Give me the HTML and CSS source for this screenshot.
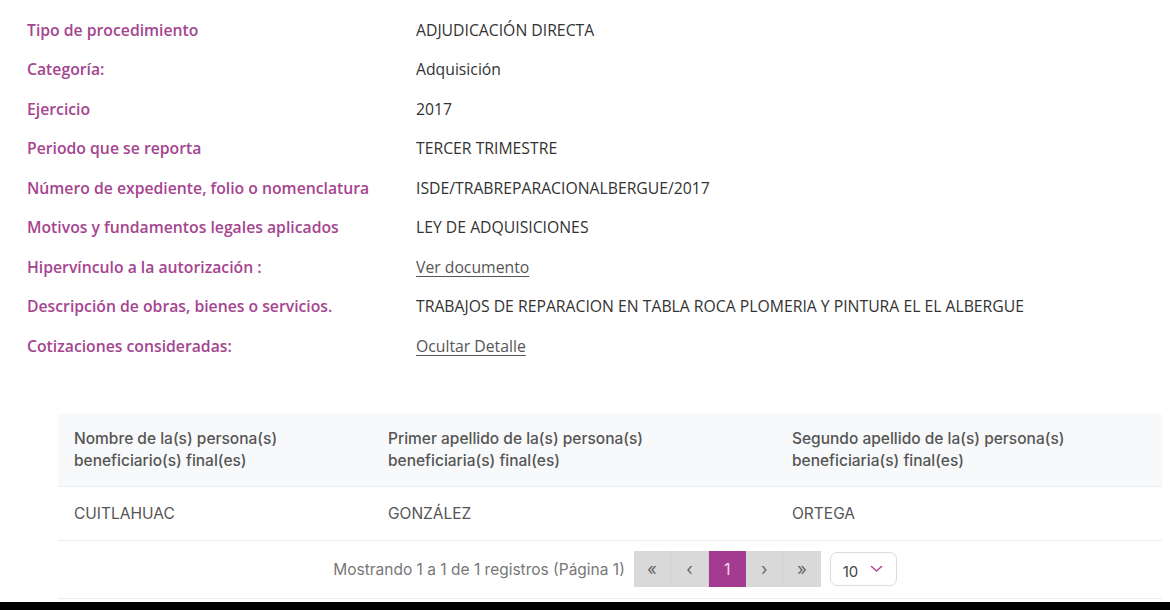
FILE: index.html
```html
<!DOCTYPE html>
<html lang="es">
<head>
    <meta charset="UTF-8">
    <meta name="viewport" content="width=device-width, initial-scale=1.0">
    <title>Detalle del procedimiento</title>
    <link rel="stylesheet" href="styles.css">
</head>
<body>
    <div class="page">
        <div class="details">
            <div class="row">
                <div class="label">Tipo de procedimiento</div>
                <div class="value">ADJUDICACIÓN DIRECTA</div>
            </div>
            <div class="row">
                <div class="label">Categoría:</div>
                <div class="value">Adquisición</div>
            </div>
            <div class="row">
                <div class="label">Ejercicio</div>
                <div class="value">2017</div>
            </div>
            <div class="row">
                <div class="label">Periodo que se reporta</div>
                <div class="value">TERCER TRIMESTRE</div>
            </div>
            <div class="row">
                <div class="label">Número de expediente, folio o nomenclatura</div>
                <div class="value">ISDE/TRABREPARACIONALBERGUE/2017</div>
            </div>
            <div class="row">
                <div class="label">Motivos y fundamentos legales aplicados</div>
                <div class="value">LEY DE ADQUISICIONES</div>
            </div>
            <div class="row">
                <div class="label">Hipervínculo a la autorización :</div>
                <div class="value"><a href="#" class="link">Ver documento</a></div>
            </div>
            <div class="row">
                <div class="label">Descripción de obras, bienes o servicios.</div>
                <div class="value">TRABAJOS DE REPARACION EN TABLA ROCA PLOMERIA Y PINTURA EL EL ALBERGUE</div>
            </div>
            <div class="row">
                <div class="label">Cotizaciones consideradas:</div>
                <div class="value"><a href="#" class="link">Ocultar Detalle</a></div>
            </div>
        </div>

        <div class="table-wrap">
            <table class="grid">
                <thead>
                    <tr>
                        <th class="col-1">Nombre de la(s) persona(s)<br>beneficiario(s) final(es)</th>
                        <th class="col-2">Primer apellido de la(s) persona(s)<br>beneficiaria(s) final(es)</th>
                        <th class="col-3">Segundo apellido de la(s) persona(s)<br>beneficiaria(s) final(es)</th>
                    </tr>
                </thead>
                <tbody>
                    <tr>
                        <td>CUITLAHUAC</td>
                        <td>GONZÁLEZ</td>
                        <td>ORTEGA</td>
                    </tr>
                </tbody>
            </table>
            <div class="table-footer">
                <span class="summary">Mostrando 1 a 1 de 1 registros (Página 1)</span>
                <div class="pager">
                    <button class="page-btn">&laquo;</button>
                    <button class="page-btn">&lsaquo;</button>
                    <button class="page-btn active">1</button>
                    <button class="page-btn">&rsaquo;</button>
                    <button class="page-btn">&raquo;</button>
                </div>
                <div class="page-size">
                    <span>10</span>
                    <svg width="13" height="8" viewBox="0 0 13 8"><path d="M1.5 1.5 L6.5 6 L11.5 1.5" fill="none" stroke="#b0489a" stroke-width="1.6" stroke-linecap="round" stroke-linejoin="round"/></svg>
                </div>
            </div>
        </div>
    </div>
    <div class="bottom-bar"></div>
</body>
</html>
```

FILE: styles.css
```css
body {
    margin: 0;
    background: #fff;
    font-family: "Open Sans", Arial, sans-serif;
    font-size: 15.75px;
    color: #333;
}
.page {
    height: 602px;
    overflow: hidden;
}
.details {
    padding: 10px 0 0 27px;
}
.row {
    display: flex;
    height: 39.5px;
    align-items: center;
}
.label {
    width: 389px;
    flex-shrink: 0;
    color: #a5448f;
    font-weight: 600;
}
.value {
    color: #333;
}
.link {
    color: #555;
    text-decoration: underline;
    text-underline-offset: 3px;
}
.table-wrap {
    margin: 48px 8px 0 58px;
    font-family: Inter, Roboto, Arial, sans-serif;
    font-size: 15.5px;
    color: #555;
}
.grid {
    width: 100%;
    border-collapse: collapse;
    table-layout: fixed;
}
.grid th {
    background: #f8f9fa;
    text-align: left;
    font-weight: 500;
    line-height: 22px;
    padding: 14px 16px;
    border-bottom: 1px solid #ebedef;
}
.col-1 { width: 282px; }
.col-2 { width: 372px; }
.grid td {
    padding: 16px 16px;
    line-height: 21px;
    border-bottom: 1px solid #ebedef;
}
.table-footer {
    display: flex;
    justify-content: center;
    align-items: center;
    height: 57px;
    border-bottom: 1px solid #ebedef;
    padding-left: 10px;
}
.summary {
    color: #777;
    margin-right: 9px;
}
.pager {
    display: flex;
    background: #d9d9d9;
    height: 36px;
}
.page-btn {
    width: 37.4px;
    height: 36px;
    border: none;
    border-right: 1px solid #d0d0d0;
    background: #d9d9d9;
    color: #666;
    font-family: Inter, Arial, sans-serif;
    font-size: 17px;
    padding: 0;
}
.page-btn:last-child {
    border-right: none;
}
.page-btn.active {
    background: #a53b91;
    color: #f2d6ec;
    font-size: 16px;
    border-right: none;
}
.page-size {
    display: flex;
    align-items: center;
    justify-content: space-between;
    width: 67px;
    box-sizing: border-box;
    margin-left: 9px;
    height: 34px;
    padding: 0 13px 0 12px;
    border: 1px solid #dcdcdc;
    border-radius: 7px;
    color: #444;
    font-size: 15px;
}
.page-size span {
    padding-top: 4px;
}
.bottom-bar {
    height: 8px;
    background: #000;
}
```
